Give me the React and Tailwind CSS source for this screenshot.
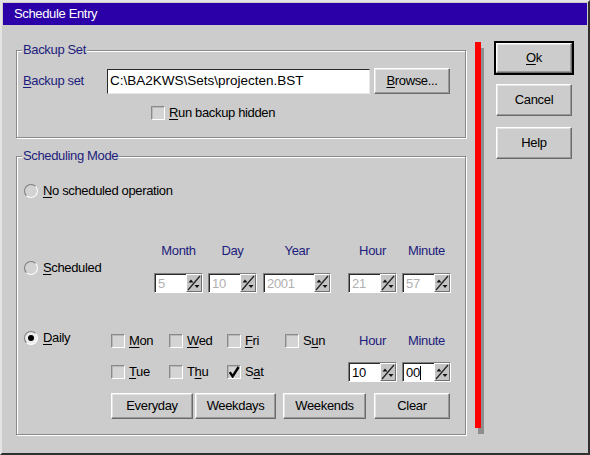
import React from "react";

// small helpers for the OS/2-ish 3D controls
const U = ({ children }) => <span className="underline underline-offset-2">{children}</span>;

function Btn({ className = "", children }) {
  return (
    <div
      className={`flex items-center justify-center border border-t-white border-l-white border-r-[#6a6a6a] border-b-[#6a6a6a] shadow-[inset_-1px_-1px_0_#9a9a9a,inset_1px_1px_0_#e4e4e4] text-black ${className}`}
    >
      {children}
    </div>
  );
}

function SpinArrows() {
  return (
    <svg viewBox="0 0 14 16" className="w-[14px] h-[16px] block">
      <path d="M1 15 L13 1" stroke="#1e1e1e" strokeWidth="1.2" fill="none" />
      <path d="M1.5 7.5 L4 4.5 L6.5 7.5 Z" fill="#111" />
      <path d="M7.5 10 L12.5 10 L10 13 Z" fill="#111" />
    </svg>
  );
}

function Spin({ w, value, disabled, caret }) {
  return (
    <div className={`flex h-[20px] ${w} border border-t-[#808080] border-l-[#808080] border-b-white border-r-white`}>
      <div className="flex-1 flex items-center bg-white border-t border-l border-[#2a2a2a] pl-[2px] overflow-hidden">
        <span className={disabled ? "text-[#b0b0b0]" : "text-black"}>{value}</span>
        {caret && <span className="w-px h-[14px] bg-black" />}
      </div>
      <div className="w-[16px] bg-[#c4c4c4] border border-t-white border-l-white border-r-[#707070] border-b-[#707070]">
        <SpinArrows />
      </div>
    </div>
  );
}

function Radio({ on }) {
  return (
    <span
      className={`w-[14px] h-[14px] shrink-0 rounded-full flex items-center justify-center border border-t-[#7c7c7c] border-l-[#7c7c7c] border-b-white border-r-white ${on ? "bg-[#ececec]" : "bg-[#d2d2d2]"}`}
    >
      {on && <span className="w-[6px] h-[6px] rounded-full bg-black" />}
    </span>
  );
}

function Check({ on }) {
  return (
    <span className="w-[14px] h-[14px] shrink-0 flex items-center justify-center border border-t-[#8a8a8a] border-l-[#8a8a8a] border-b-white border-r-white bg-[#d4d4d4] shadow-[inset_1px_1px_0_#b8b8b8]">
      {on && (
        <svg viewBox="0 0 12 12" className="w-[12px] h-[12px] block">
          <path d="M1.8 6.2 L4.6 10.4 L10.6 1" fill="none" stroke="#000" strokeWidth="2.4" />
        </svg>
      )}
    </span>
  );
}

function Day({ on, children }) {
  return (
    <div className="w-[58px] flex items-center gap-[4px]">
      <Check on={on} />
      <span>{children}</span>
    </div>
  );
}

function Group({ title, className = "", children }) {
  return (
    <div className={`relative border border-[#8a8a8a] shadow-[1px_1px_0_#ffffff,inset_1px_1px_0_#ffffff] ${className}`}>
      <span className="absolute left-[5px] -top-[9px] px-[1px] bg-[#cccccc] leading-[16px] text-[#1c1c7c]">{title}</span>
      {children}
    </div>
  );
}

function Col({ w, label, children }) {
  return (
    <div className={`flex flex-col items-center ${w}`}>
      <span className="h-[15px] text-[#1c1c7c]">{label}</span>
      <div className="mt-[15px] w-full">{children}</div>
    </div>
  );
}

export default function App() {
  return (
    <div className="w-[590px] h-[455px] bg-[#cccccc] border-2 border-t-[#e4e4e4] border-l-[#e4e4e4] border-b-[#303030] border-r-[#303030] p-px text-[13px] tracking-[-0.35px] leading-[16px] font-['Liberation_Sans',Arial,sans-serif] text-black flex flex-col overflow-hidden">
      {/* title bar */}
      <div className="h-[22px] shrink-0 bg-[#2b00a8] text-white flex items-center pl-[11px]">Schedule Entry</div>

      <div className="flex">
        <div className="ml-[13px] w-[450px] shrink-0">
          {/* Backup set */}
          <Group title="Backup Set" className="mt-[25px] h-[88px]">
            <div className="flex items-center mt-[17px] h-[26px]">
              <span className="ml-[6px] w-[84px] text-[#1c1c7c]">
                <U>B</U>ackup set
              </span>
              <div className="w-[263px] h-[25px] bg-white flex items-center pl-[2px] border border-t-[#2a2a2a] border-l-[#2a2a2a] border-b-[#e8e8e8] border-r-[#e8e8e8] text-[13.5px] tracking-normal">
                C:\BA2KWS\Sets\projecten.BST
              </div>
              <Btn className="ml-[4px] w-[76px] h-[26px]">
                <span>
                  <U>B</U>rowse...
                </span>
              </Btn>
            </div>
            <div className="flex items-center gap-[4px] mt-[11px] ml-[134px]">
              <Check />
              <span>
                <U>R</U>un backup hidden
              </span>
            </div>
          </Group>

          {/* Scheduling mode */}
          <Group title="Scheduling Mode" className="mt-[18px] h-[279px]">
            <div className="flex items-center gap-[5px] mt-[27px] ml-[7px] h-[14px]">
              <Radio />
              <span>
                <U>N</U>o scheduled operation
              </span>
            </div>

            <div className="flex mt-[45px] ml-[7px]">
              <div className="w-[130px] flex items-center gap-[5px] mt-[18px] h-[14px]">
                <Radio />
                <span>
                  <U>S</U>cheduled
                </span>
              </div>
              <Col w="w-[49px]" label="Month">
                <Spin w="w-full" value="5" disabled />
              </Col>
              <Col w="w-[49px] ml-[5px]" label="Day">
                <Spin w="w-full" value="10" disabled />
              </Col>
              <Col w="w-[68px] ml-[6px]" label="Year">
                <Spin w="w-full" value="2001" disabled />
              </Col>
              <Col w="w-[49px] ml-[17px]" label="Hour">
                <Spin w="w-full" value="21" disabled />
              </Col>
              <Col w="w-[49px] ml-[5px]" label="Minute">
                <Spin w="w-full" value="57" disabled />
              </Col>
            </div>

            <div className="flex mt-[38px] ml-[7px]">
              <div className="w-[87px] flex items-center gap-[5px] h-[14px]">
                <Radio on />
                <span>
                  <U>D</U>aily
                </span>
              </div>
              <div className="flex flex-col mt-[2px]">
                <div className="flex items-center h-[15px]">
                  <Day>
                    <U>M</U>on
                  </Day>
                  <Day>
                    <U>W</U>ed
                  </Day>
                  <Day>
                    <U>F</U>ri
                  </Day>
                  <Day>
                    S<U>u</U>n
                  </Day>
                  <span className="ml-[5px] w-[49px] text-center text-[#1c1c7c]">Hour</span>
                  <span className="ml-[5px] w-[49px] text-center text-[#1c1c7c]">Minute</span>
                </div>
                <div className="flex items-center h-[20px] mt-[14px]">
                  <Day>
                    <U>T</U>ue
                  </Day>
                  <Day>
                    T<U>h</U>u
                  </Day>
                  <Day on>
                    S<U>a</U>t
                  </Day>
                  <div className="w-[58px]" />
                  <div className="ml-[5px]">
                    <Spin w="w-[49px]" value="10" />
                  </div>
                  <div className="ml-[5px]">
                    <Spin w="w-[49px]" value="00" caret />
                  </div>
                </div>
                <div className="flex mt-[11px]">
                  <Btn className="w-[82px] h-[26px]">Everyday</Btn>
                  <Btn className="ml-[2px] w-[81px] h-[26px]">Weekdays</Btn>
                  <Btn className="ml-[7px] w-[83px] h-[26px]">Weekends</Btn>
                  <Btn className="ml-[8px] w-[76px] h-[26px]">Clear</Btn>
                </div>
              </div>
            </div>
          </Group>
        </div>

        {/* red divider */}
        <div className="ml-[9px] mt-[17px] w-[6px] h-[386px] shrink-0 bg-[#ff0000] shadow-[3px_6px_0_#8e8e8e]" />

        {/* dialog buttons */}
        <div className="ml-[13px] mt-[16px] flex flex-col">
          <div className="w-[80px] h-[34px] border-2 border-black">
            <Btn className="w-full h-full">
              <span>
                <U>O</U>k
              </span>
            </Btn>
          </div>
          <Btn className="ml-[2px] mt-[9px] w-[76px] h-[32px]">Cancel</Btn>
          <Btn className="ml-[2px] mt-[11px] w-[76px] h-[32px]">Help</Btn>
        </div>
      </div>
    </div>
  );
}
